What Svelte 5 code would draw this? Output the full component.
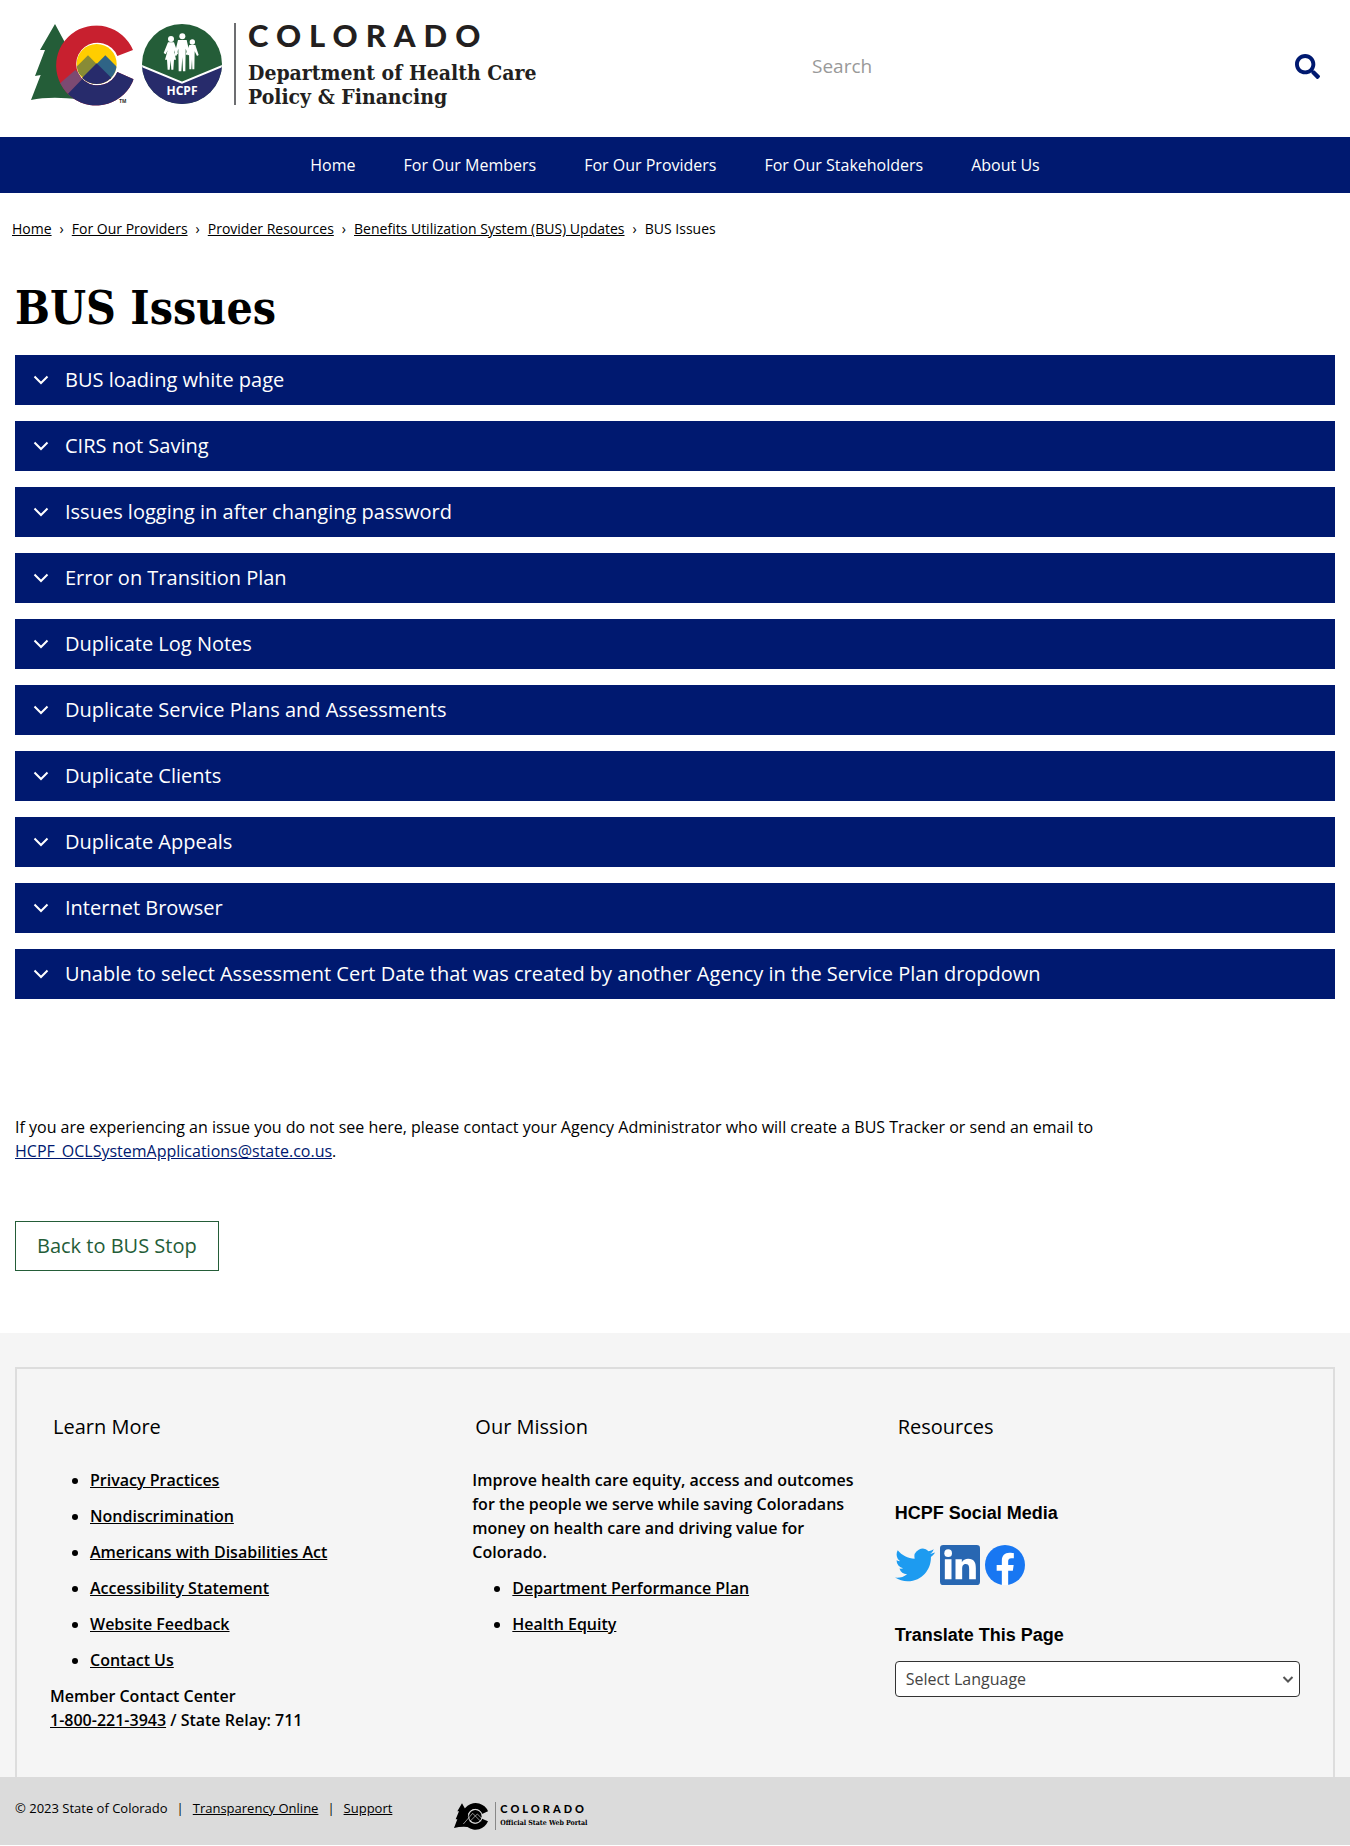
<script lang="ts">
  const nav = ['Home', 'For Our Members', 'For Our Providers', 'For Our Stakeholders', 'About Us'];
  const crumbs = ['Home', 'For Our Providers', 'Provider Resources', 'Benefits Utilization System (BUS) Updates'];
  const issues = [
    'BUS loading white page',
    'CIRS not Saving',
    'Issues logging in after changing password',
    'Error on Transition Plan',
    'Duplicate Log Notes',
    'Duplicate Service Plans and Assessments',
    'Duplicate Clients',
    'Duplicate Appeals',
    'Internet Browser',
    'Unable to select Assessment Cert Date that was created by another Agency in the Service Plan dropdown'
  ];
  const learn = [
    'Privacy Practices',
    'Nondiscrimination',
    'Americans with Disabilities Act',
    'Accessibility Statement',
    'Website Feedback',
    'Contact Us'
  ];
  const mission = ['Department Performance Plan', 'Health Equity'];
</script>

<header class="top">
  <a class="brand" href="#home" aria-label="Colorado Department of Health Care Policy and Financing">
    <svg class="emblem" viewBox="0 0 600 252" aria-hidden="true">
      <defs>
        <clipPath id="c-shape">
          <path d="M309 84 A120 120 0 1 0 311 172 L262 150 A64 64 0 1 1 262 102 Z" />
        </clipPath>
        <clipPath id="sun"><circle cx="200" cy="126" r="60" /></clipPath>
        <clipPath id="seal"><circle cx="456" cy="126" r="120" /></clipPath>
      </defs>
      <path fill="#245d38" d="M75 6 L104 60 L150 232 Q60 222 3 234 L32 159 L15 162 L45 84 L30 84 Z" />
      <circle cx="200" cy="126" r="67" fill="#fff" />
      <g clip-path="url(#c-shape)">
        <path fill="#c8202f" d="M70 0H330V260H70z" />
        <path fill="#7c4a72" d="M76 196 L136 144 L164 172 L112 232 L70 240z" />
        <path fill="#272b6b" d="M104 226 L156 172 L200 126 L330 126 V260 H120z" />
      </g>
      <g clip-path="url(#sun)">
        <path fill="#ffcd00" d="M130 50H270V200H130z" />
        <path fill="#888b36" d="M130 144 L174 100 L200 126 L160 166z" />
        <path fill="#2f6486" d="M200 126 L226 100 L270 144 V180 H250z" />
        <path fill="#272b6b" d="M140 184 L200 124 L260 184 V200 H140z" />
      </g>
      <g clip-path="url(#seal)">
        <path fill="#245d38" d="M330 0H580V260H330z" />
        <path fill="#272b6b" stroke="#fff" stroke-width="6" d="M320 130 H330 L456 182 L582 130 H592 V270 H320z" />
      </g>
      <g fill="#fff">
        <circle cx="423" cy="51" r="9" /><circle cx="457" cy="43" r="9" /><circle cx="487" cy="60" r="8" />
        <path d="M414 61h18l12 34-5 4-7-14 6 28h-6l-2 30h-6l-2-28-3 28h-6l-2-30h-6l8-28-6 12-6-4z" />
        <path d="M444 54h26l10 44-6 2-7-20-1 68h-7l-2-42-3 42h-8l-1-68-6 22-6-2z" />
        <path d="M478 69h18l10 30-5 3-7-14-1 54h-6l-1-30-2 30h-6l-1-52-5 10-5-3z" />
      </g>
      <text class="seal-text" x="456" y="220" text-anchor="middle">HCPF</text>
      <text class="tm" x="268" y="243">TM</text>
    </svg>
    <span class="wordmark">
      <strong>COLORADO</strong>
      <span>Department of Health Care<br />Policy &amp; Financing</span>
    </span>
  </a>
  <form class="search" role="search">
    <input type="search" placeholder="Search" aria-label="Search" />
    <button type="button" aria-label="Submit search">
      <svg viewBox="0 0 512 512" aria-hidden="true"><path fill="currentColor" d="M505 442.700 405.300 343c-4.500-4.500-10.600-7-17-7H372c27.600-35.300 44-79.700 44-128C416 93.100 322.900 0 208 0S0 93.100 0 208s93.100 208 208 208c48.300 0 92.700-16.400 128-44v16.300c0 6.400 2.500 12.500 7 17l99.700 99.700c9.400 9.400 24.600 9.400 33.900 0l28.300-28.300c9.400-9.400 9.400-24.600.1-34zM208 336c-70.700 0-128-57.200-128-128 0-70.700 57.200-128 128-128 70.700 0 128 57.200 128 128 0 70.700-57.200 128-128 128z" /></svg>
    </button>
  </form>
</header>

<nav class="main-nav" aria-label="Main">
  <ul>
    {#each nav as item}<li><a href="#nav">{item}</a></li>{/each}
  </ul>
</nav>

<nav class="crumbs" aria-label="Breadcrumb">
  {#each crumbs as c}<a href="#crumb">{c}</a><span>›</span>{/each}<span>BUS Issues</span>
</nav>

<main>
  <h1>BUS Issues</h1>
  <div class="accordion">
    {#each issues as issue}
      <button type="button" aria-expanded="false">
        <svg viewBox="0 0 16 16" aria-hidden="true"><path d="M1.500 4.500 8 11l6.500-6.500" /></svg>
        <span>{issue}</span>
      </button>
    {/each}
  </div>
  <p class="note">
    If you are experiencing an issue you do not see here, please contact your Agency Administrator who will create a BUS Tracker or send an email to<br />
    <a href="mailto:HCPF_OCLSystemApplications@state.co.us">HCPF_OCLSystemApplications@state.co.us</a>.
  </p>
  <a class="back" href="#bus-stop">Back to BUS Stop</a>
</main>

<footer>
  <div class="panel">
    <section>
      <h2>Learn More</h2>
      <ul>{#each learn as l}<li><a href="#learn">{l}</a></li>{/each}</ul>
      <p>Member Contact Center<br /><a href="tel:18002213943">1-800-221-3943</a> / State Relay: 711</p>
    </section>
    <section>
      <h2>Our Mission</h2>
      <p>Improve health care equity, access and outcomes for the people we serve while saving Coloradans money on health care and driving value for Colorado.</p>
      <ul class="after">{#each mission as m}<li><a href="#mission">{m}</a></li>{/each}</ul>
    </section>
    <section>
      <h2>Resources</h2>
      <h3 class="first">HCPF Social Media</h3>
      <div class="social">
        <a href="#twitter" aria-label="Twitter"><svg viewBox="0 0 24 24"><path fill="#1d9bf0" d="M23.950 4.570a10 10 0 0 1-2.820.770 4.960 4.960 0 0 0 2.160-2.720c-.95.550-2 .950-3.130 1.180a4.920 4.920 0 0 0-8.380 4.480C7.690 8.100 4.070 6.130 1.640 3.160a4.820 4.820 0 0 0-.67 2.480c0 1.710.87 3.210 2.190 4.100a4.900 4.900 0 0 1-2.230-.62v.06a4.920 4.920 0 0 0 3.950 4.830 5 5 0 0 1-2.210.080 4.940 4.940 0 0 0 4.600 3.420A9.870 9.870 0 0 1 0 19.540a14 14 0 0 0 7.550 2.210c9.050 0 14-7.500 14-13.980 0-.210 0-.420-.02-.630a9.940 9.940 0 0 0 2.460-2.550z" /></svg></a>
        <a href="#linkedin" aria-label="LinkedIn"><svg viewBox="0 0 24 24"><rect width="24" height="24" rx="2" fill="#2867b2" /><g fill="#fff"><circle cx="4.900" cy="4.900" r="2.300" /><path d="M2.900 8.600h4V20.500h-4zM9.300 8.600h3.800v1.700c.7-1.200 2.100-2 3.800-2 3.700 0 4.600 2.400 4.600 5.600v6.600h-4v-5.900c0-1.500-.1-3.200-2-3.200s-2.200 1.500-2.200 3.100v6h-4z" /></g></svg></a>
        <a href="#facebook" aria-label="Facebook"><svg viewBox="0 0 24 24"><circle cx="12" cy="12" r="12" fill="#1877f2" /><path fill="#fff" d="M10.100 24v-8.500H7V12h3.100V9.400c0-3 1.800-4.700 4.500-4.700 1.300 0 2.700.2 2.700.2v3h-1.500c-1.500 0-1.900.9-1.900 1.900V12h3.300l-.5 3.500h-2.800V24z" /></svg></a>
      </div>
      <h3><label for="language">Translate This Page</label></h3>
      <div class="select">
        <select id="language"><option>Select Language</option></select>
        <svg viewBox="0 0 16 16" aria-hidden="true"><path d="M3.500 6 8 10.500 12.500 6" /></svg>
      </div>
    </section>
  </div>
  <div class="bottom">
    <p>© 2023 State of Colorado<span>|</span><a href="#transparency">Transparency Online</a><span>|</span><a href="#support">Support</a></p>
    <a class="portal" href="#portal" aria-label="Colorado Official State Web Portal">
      <svg viewBox="0 0 108 84" aria-hidden="true">
        <path d="M24 4 L44 40 L50 76 Q24 72 0 78 L10 52 L5 52 L15 28 L10 28z" />
        <path d="M102 28 A40 40 0 1 0 102 58 L84 50 A22 22 0 1 1 84 36z" />
        <circle cx="64" cy="43" r="19" />
        <g fill="none" stroke="#dbdbdb" stroke-width="2"><circle cx="64" cy="43" r="21" /><path d="M28 66 L56 34 L80 58 M48 58 L70 36 L84 50" /></g>
      </svg>
      <span><strong>COLORADO</strong><em>Official State Web Portal</em></span>
    </a>
  </div>
</footer>

<style>
  :global(body) { margin: 0; background: #fff; color: #000; font: 16px/24px "Open Sans", "Noto Sans", sans-serif; }
  a { color: inherit; }
  ul, p, h1, h2, h3 { margin: 0; padding: 0; }
  button { font: inherit; cursor: pointer; }

  .top { display: flex; align-items: flex-start; justify-content: space-between; padding: 22px 30px 27px; }
  .brand { display: flex; text-decoration: none; color: #231f20; }
  .emblem { width: 200px; height: 84px; margin-right: 4px; }
  .seal-text { font: 700 36px "Open Sans", sans-serif; fill: #fff; }
  .tm { font: 700 14px "Open Sans", sans-serif; fill: #231f20; }
  .wordmark { display: flex; flex-direction: column; height: 82px; margin-top: 1px; padding-left: 12px; border-left: 2px solid #6d6e71; }
  .wordmark strong { font: 900 31px/24px Lato, sans-serif; letter-spacing: 8px; }
  .wordmark span { margin-top: 14px; font: 700 21px/24px "DejaVu Serif Condensed", "DejaVu Serif", serif; white-space: nowrap; }
  .search { display: flex; align-items: center; justify-content: space-between; width: 40%; height: 88px; }
  .search input { flex: 1; min-width: 0; padding: 0 8px; border: 0; outline: 0; background: none; font: 19px/28px "Open Sans", sans-serif; }
  .search input::placeholder { color: #999; opacity: 1; }
  .search button { display: flex; padding: 0; border: 0; background: none; color: #001970; }
  .search button svg { width: 25px; height: 25px; }

  .main-nav { background: #001970; color: #fff; }
  .main-nav ul { display: flex; justify-content: center; list-style: none; }
  .main-nav a { display: block; padding: 16px 24px; text-decoration: none; }

  .crumbs { display: flex; flex-wrap: wrap; gap: 8px; padding: 24px 12px 0; font-size: 14px; }

  main { padding: 36px 15px 62px; }
  h1 { font: 700 46px/62px "DejaVu Serif Condensed", "DejaVu Serif", serif; }
  .accordion { display: flex; flex-direction: column; gap: 16px; margin-top: 16px; }
  .accordion button { display: flex; align-items: center; gap: 16px; height: 50px; padding: 0 18px; border: 0; background: #001970; color: #fff; font-size: 20px; text-align: left; }
  .accordion svg { width: 16px; height: 16px; fill: none; stroke: #fff; stroke-width: 2; }
  .note { margin-top: 116px; }
  .note a { color: #001970; }
  .back { display: inline-block; margin-top: 58px; padding: 11px 21px; border: 1px solid #245d38; color: #245d38; font-size: 20px; line-height: 26px; text-decoration: none; }

  footer { padding-top: 34px; background: #f5f5f5; }
  .panel { display: grid; grid-template-columns: repeat(3, 1fr); margin: 0 15px; padding: 0 16px 45px 33px; border: 2px solid #ddd; border-bottom: 0; font-weight: 600; }
  section { padding-right: 17px; }
  section p { padding-right: 16px; }
  h2 { margin: 44px 3px 27px; font-size: 20px; line-height: 28px; font-weight: 400; }
  section ul { padding-left: 40px; }
  section li { margin-bottom: 12px; }
  .after { margin-top: 12px; }
  h3 { font: 700 18px/24px "Liberation Sans", Arial, sans-serif; }
  .first { margin-top: 60px; }
  .social { display: flex; gap: 5px; margin: 20px 0 38px; }
  .social a, .social svg { display: block; width: 40px; height: 40px; }
  .select { position: relative; margin-top: 14px; }
  .select select { width: 100%; height: 36px; padding: 0 10px; appearance: none; border: 1px solid #333; border-radius: 4px; background: #fff; color: #444; font: 16px "Open Sans", sans-serif; }
  .select svg { position: absolute; right: 4px; top: 10px; width: 16px; height: 16px; fill: none; stroke: #555; stroke-width: 2; pointer-events: none; }

  .bottom { display: flex; align-items: flex-start; gap: 62px; padding: 19px 15px 15px; background: #dbdbdb; font-size: 13px; }
  .bottom p span { margin: 0 9px; }
  .portal { display: flex; align-items: center; margin-top: 6px; color: #000; text-decoration: none; }
  .portal svg { width: 36px; height: 28px; margin-right: 5px; }
  .portal span { display: flex; flex-direction: column; padding-left: 4px; border-left: 1px solid #888; }
  .portal strong { font: 900 11px/14px Lato, sans-serif; letter-spacing: 3px; }
  .portal em { font: 700 7px/14px "DejaVu Serif Condensed", serif; }
</style>
